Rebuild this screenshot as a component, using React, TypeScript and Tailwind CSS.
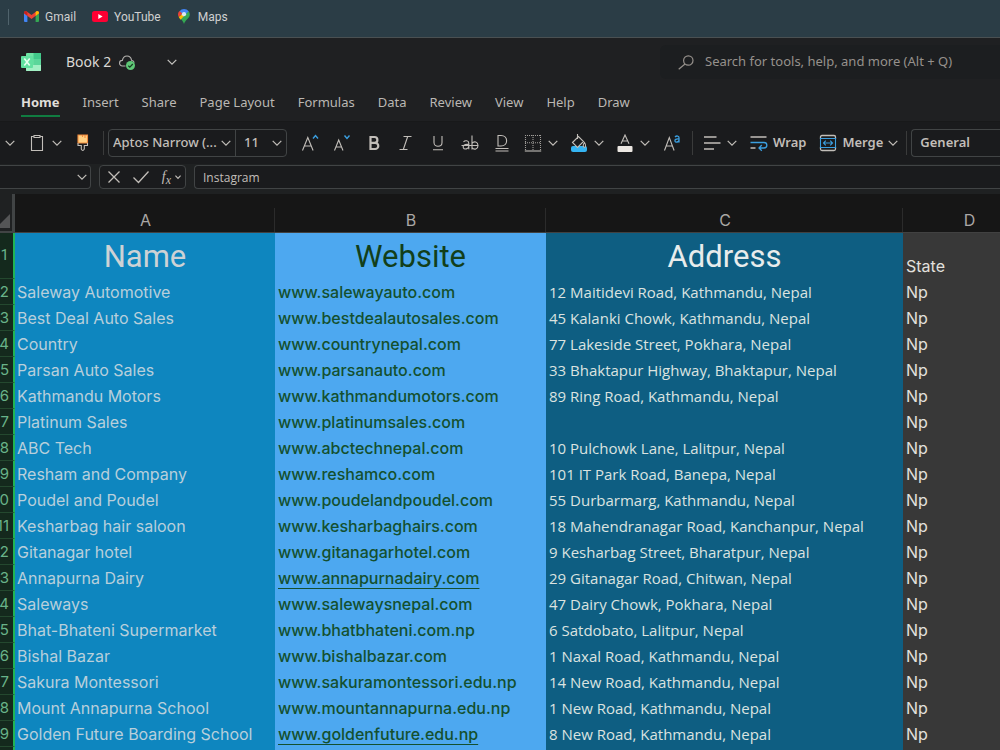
import type { ReactNode } from 'react';
import { clsx } from 'clsx';

const tabs = ['Home', 'Insert', 'Share', 'Page Layout', 'Formulas', 'Data', 'Review', 'View', 'Help', 'Draw'];

const rows = [
  { name: 'Saleway Automotive', site: 'www.salewayauto.com', address: '12 Maitidevi Road, Kathmandu, Nepal' },
  { name: 'Best Deal Auto Sales', site: 'www.bestdealautosales.com', address: '45 Kalanki Chowk, Kathmandu, Nepal' },
  { name: 'Country', site: 'www.countrynepal.com', address: '77 Lakeside Street, Pokhara, Nepal' },
  { name: 'Parsan Auto Sales', site: 'www.parsanauto.com', address: '33 Bhaktapur Highway, Bhaktapur, Nepal' },
  { name: 'Kathmandu Motors', site: 'www.kathmandumotors.com', address: '89 Ring Road, Kathmandu, Nepal' },
  { name: 'Platinum Sales', site: 'www.platinumsales.com', address: '' },
  { name: 'ABC Tech', site: 'www.abctechnepal.com', address: '10 Pulchowk Lane, Lalitpur, Nepal' },
  { name: 'Resham and Company', site: 'www.reshamco.com', address: '101 IT Park Road, Banepa, Nepal' },
  { name: 'Poudel and Poudel', site: 'www.poudelandpoudel.com', address: '55 Durbarmarg, Kathmandu, Nepal' },
  { name: 'Kesharbag hair saloon', site: 'www.kesharbaghairs.com', address: '18 Mahendranagar Road, Kanchanpur, Nepal' },
  { name: 'Gitanagar hotel', site: 'www.gitanagarhotel.com', address: '9 Kesharbag Street, Bharatpur, Nepal' },
  { name: 'Annapurna Dairy', site: 'www.annapurnadairy.com', address: '29 Gitanagar Road, Chitwan, Nepal', linked: true },
  { name: 'Saleways', site: 'www.salewaysnepal.com', address: '47 Dairy Chowk, Pokhara, Nepal' },
  { name: 'Bhat-Bhateni Supermarket', site: 'www.bhatbhateni.com.np', address: '6 Satdobato, Lalitpur, Nepal' },
  { name: 'Bishal Bazar', site: 'www.bishalbazar.com', address: '1 Naxal Road, Kathmandu, Nepal' },
  { name: 'Sakura Montessori', site: 'www.sakuramontessori.edu.np', address: '14 New Road, Kathmandu, Nepal' },
  { name: 'Mount Annapurna School', site: 'www.mountannapurna.edu.np', address: '1 New Road, Kathmandu, Nepal' },
  { name: 'Golden Future Boarding School', site: 'www.goldenfuture.edu.np', address: '8 New Road, Kathmandu, Nepal', linked: true },
];

function Chevron({ className, small }: { className?: string; small?: boolean }) {
  return (
    <svg
      className={clsx('shrink-0', small ? 'h-1.5 w-1.5' : 'h-2.5 w-2.5', className)}
      viewBox="0 0 10 10"
      fill="none"
      stroke="currentColor"
      strokeWidth={small ? 2 : 1.2}
    >
      <path d="M.7 2.8 5 7.2l4.3-4.4" />
    </svg>
  );
}

function Icon({ children }: { children: ReactNode }) {
  return (
    <svg className="h-[18px] w-[18px] shrink-0" viewBox="0 0 18 18" fill="none" stroke="currentColor" strokeWidth="1.1">
      {children}
    </svg>
  );
}

function IconButton({ label, children }: { label: string; children: ReactNode }) {
  return (
    <button aria-label={label} className="flex h-8 w-8 shrink-0 items-center justify-center">
      <Icon>{children}</Icon>
    </button>
  );
}

function MenuButton({ label, children }: { label: string; children: ReactNode }) {
  return (
    <button aria-label={label} className="flex h-8 w-[46px] shrink-0 items-center justify-center gap-1.5">
      <Icon>{children}</Icon>
      <Chevron />
    </button>
  );
}

function Divider() {
  return <div className="h-6 w-px shrink-0 bg-[#3a3b3b]" />;
}

function Bookmarks() {
  return (
    <nav className="flex h-[38px] items-center border-b border-[#4a5052] bg-[#2b3d46] pb-1 pl-2 font-['Roboto',sans-serif] text-xs text-[#cfd0d0]">
      <div className="h-4 w-px bg-[#50636c]" />
      <a href="#gmail" className="ml-[15px] flex items-center gap-1.5">
        <svg className="h-[11px] w-[15px]" viewBox="0 0 15 11">
          <path fill="#4285f4" d="M0 1.5V10q0 1 1 1h2.4V4.5Z" />
          <path fill="#34a853" d="M15 1.5V10q0 1-1 1h-2.4V4.5Z" />
          <path fill="#ea4335" d="M0 1.6Q.2 0 1.6 0q.6 0 1.2.5L7.5 4l4.7-3.5q.6-.5 1.2-.5Q14.8 0 15 1.6v.7L7.5 7.9 0 2.3Z" />
          <path fill="#c5221f" d="M0 1.6Q.2 0 1.6 0q1 0 1.8.9v4L0 2.3Z" />
          <path fill="#fbbc04" d="M15 1.6Q14.8 0 13.4 0q-1 0-1.8.9v4L15 2.3Z" />
        </svg>
        Gmail
      </a>
      <a href="#youtube" className="ml-4 flex items-center gap-1.5">
        <svg className="h-[11px] w-4" viewBox="0 0 16 11">
          <rect width="16" height="11" rx="2.5" fill="#ff0033" />
          <path d="M6.3 3v5l4.3-2.5Z" fill="#fff" />
        </svg>
        YouTube
      </a>
      <a href="#maps" className="ml-[17px] flex items-center gap-2">
        <svg className="h-[15px] w-3" viewBox="0 0 12 15">
          <path fill="#34a853" d="M11.8 5.5C11.8 9.5 7.3 10.5 6 15 5.2 12.5 3.9 11.2 2.5 9.5L10.5 2q1.3 1.5 1.3 3.5Z" />
          <path fill="#4285f4" d="M10.7 2.2 5 8 1.5 2.2Q3.2 0 6 0t4.7 2.2Z" />
          <path fill="#ea4335" d="M1.5 2.1 4.2 4.4.8 8Q0 6.8 0 5.2q0-1.7 1.5-3.1Z" />
          <path fill="#fbbc04" d="M4.2 5 .7 8.1q.7 1.3 1.9 2.6L7 6Z" />
          <circle cx="6" cy="5.2" r="2.1" fill="#dce9ee" />
        </svg>
        Maps
      </a>
    </nav>
  );
}

function TitleBar() {
  return (
    <header className="flex h-12 items-center">
      <svg className="ml-[21px] h-[18px] w-5 shrink-0" viewBox="0 0 20 18">
        <rect x="5" width="15" height="18" rx="1" fill="#6fe3a4" />
        <path fill="#41c98a" d="M12.5 0H19q1 0 1 1v5h-7.5Z" />
        <path fill="#5bd69a" d="M12.5 6H20v6h-7.5Z" />
        <path fill="#a2f0c4" d="M5 12h15v5q0 1-1 1H6q-1 0-1-1Z" />
        <rect y="3" width="12" height="12" rx="1" fill="#62e0a0" />
        <path d="m3.3 5.5 5.4 7m0-7-5.4 7" stroke="#e5fff0" strokeWidth="1.6" />
      </svg>
      <span className="ml-[25px] text-sm text-[#dad8d5]">Book 2</span>
      <svg className="ml-2 h-[15px] w-4 shrink-0" viewBox="0 0 16 15" fill="none">
        <path d="M6.5 11H3.3a2.8 2.8 0 0 1 .1-5.6C3.900 2.600 5.500 1 8 1c2.600 0 4.100 1.700 4.500 4.200 1.500.2 2.500 1 2.700 2.300" stroke="#b5b3b0" strokeWidth="1.1" />
        <circle cx="11.5" cy="10.5" r="4.5" fill="#5fc877" />
        <path d="m9.3 10.800 1.500 1.400 3-3.200" stroke="#173b22" strokeWidth="1.2" />
      </svg>
      <button aria-label="File menu" className="ml-8 text-[#c5c3c0]">
        <Chevron />
      </button>
      <label className="ml-auto flex h-[34px] w-[340px] items-center gap-[11px] rounded-l-md bg-[#1c1e20] pl-[18px] text-[#96918c]">
        <svg className="h-[15px] w-4 shrink-0" viewBox="0 0 16 15" fill="none" stroke="currentColor" strokeWidth="1.2">
          <circle cx="10.3" cy="5.5" r="4.7" />
          <path d="M7 9 .7 14.3" />
        </svg>
        <input
          aria-label="Search"
          placeholder="Search for tools, help, and more (Alt + Q)"
          className="min-w-0 flex-1 bg-transparent text-[13px] outline-none placeholder:text-[#96918c]"
        />
      </label>
    </header>
  );
}

function Tabs() {
  return (
    <nav className="flex h-9 items-center gap-[23px] border-b border-[#18191a] pl-[21px] text-[13px] text-[#bab7b3]">
      {tabs.map((tab, i) => (
        <button
          key={tab}
          className={clsx('h-[26px] shrink-0 border-b-2', i === 0 ? 'border-[#107c41] font-bold text-[#e0deda]' : 'border-transparent')}
        >
          {tab}
        </button>
      ))}
    </nav>
  );
}

function Ribbon() {
  return (
    <div className="flex h-[42px] items-center bg-[#1a1b1d] pb-px pl-[5px] text-[13px] text-[#c2beb9]">
      <button aria-label="Undo options"><Chevron /></button>
      <button aria-label="Paste" className="ml-[13px] flex items-center gap-1.5">
        <Icon>
          <path d="M5.8 2.5H3.5v14h11v-14h-2.3" />
          <path d="M6 1.5h6v2H6Z" />
        </Icon>
        <Chevron />
      </button>
      <button aria-label="Format painter" className="ml-3">
        <Icon>
          <path d="M4 1h9.5v8H4Z" fill="#ffd083" stroke="#f08a3c" />
          <path d="M8.5 1v2M11 1v3" stroke="#f08a3c" />
          <path d="M4 9v2.5h3.3V15q1.5 3 3 0v-3.5h3.2V9" />
        </Icon>
      </button>
      <div className="ml-[11px]"><Divider /></div>

      <div className="ml-1 flex h-7 shrink-0 items-center rounded border border-[#414445]">
        <div className="relative flex h-full w-[127px] items-center border-r border-[#414445]">
          <select aria-label="Font" className="h-full w-full appearance-none bg-transparent pl-1 font-medium">
            <option>Aptos Narrow (...</option>
          </select>
          <Chevron className="pointer-events-none absolute right-1" />
        </div>
        <div className="relative flex h-full w-[50px] items-center">
          <select aria-label="Font size" className="h-full w-full appearance-none bg-transparent pl-2 font-medium">
            <option>11</option>
          </select>
          <Chevron className="pointer-events-none absolute right-1" />
        </div>
      </div>

      <div className="ml-[7px] flex">
        <IconButton label="Increase font size">
          <path d="m1.5 16.5 5.3-13 5.3 13M3.3 12h7" />
          <path d="m12 4.5 2.5-3 2.500 3" stroke="#3b9fe0" strokeWidth="1.4" />
        </IconButton>
        <IconButton label="Decrease font size">
          <path d="m1.5 16.5 4.2-10.500L10 16.500M3 13h5.500" />
          <path d="m11.5 1.5 2.5 3 2.500-3" stroke="#3b9fe0" strokeWidth="1.4" />
        </IconButton>
        <IconButton label="Bold">
          <path d="M5.5 3h4a2.9 2.9 0 0 1 0 5.8h-4Zm0 5.8h4.7a3.1 3.1 0 0 1 0 6.2H5.5Z" strokeWidth="2.2" />
        </IconButton>
        <IconButton label="Italic">
          <path d="M6.5 2.5h8M2.5 15.500h8M10.700 2.500l-4.400 13" />
        </IconButton>
        <IconButton label="Underline">
          <path d="M5 2v6.5c0 5 8 5 8 0V2M4 15.8h10" />
        </IconButton>
        <IconButton label="Strikethrough">
          <path d="M2.5 8c1.500-2 5.300-1.600 5.300 1.200v6M7.800 10.500C3 10 1.700 12 2.300 13.800c1 2.200 5.500 1.200 5.500-1.600M11 1.500v14M11 9.500c2-3 6-1.600 6 2s-4 5-6 2M.5 11.500h17" />
        </IconButton>
        <IconButton label="Double underline">
          <path d="M5 1.5h3c7.5 0 7.5 10.500 0 10.500H5ZM2.500 14.500h13M2.500 17h13" />
        </IconButton>
        <MenuButton label="Borders">
          <path d="M1 1.5h16M1 8.800h16M1.500 1v15M9 1v15M16.500 1v15" strokeDasharray="1 1" opacity=".8" />
          <path d="M.8 17h16.4" />
        </MenuButton>
        <MenuButton label="Fill color">
          <rect x="1" y="12" width="16" height="6" rx="2" fill="#35b4f2" stroke="none" />
          <path d="m2.5 8.500 6-6 5 5-6 6ZM7.500 0v5M14.500 8.500c-4.500 6 4 6.500 0 0Z" fill="#1a1b1d" />
        </MenuButton>
        <MenuButton label="Font color">
          <path d="M5 9.8 9 1l4 8.800M6.300 7h5.400" />
          <rect x="1.5" y="12" width="15" height="6" rx="1" fill="#ece7e2" stroke="none" />
        </MenuButton>
        <IconButton label="Change case">
          <path d="m1.5 16.5 4.8-13 4.800 13M3 12h6.600" />
          <path d="M12 3c1.5-1.600 4-1.200 4 .7v4.800M16 5c-3-.3-4.500.5-4 2.300.7 1.500 4 .8 4-1.300" stroke="#3b9fe0" strokeWidth="1.3" />
        </IconButton>
      </div>

      <div className="ml-1"><Divider /></div>
      <button aria-label="Alignment" className="ml-2.5 flex shrink-0 items-center gap-1.5">
        <Icon>
          <path d="M1 3h12.5M1 9h16.500M1 15h10" strokeWidth="1.3" />
        </Icon>
        <Chevron />
      </button>
      <button className="ml-[13px] flex shrink-0 items-center gap-[5px] font-semibold">
        <Icon>
          <path d="M.5 3h16M.5 14h5" strokeWidth="1.3" />
          <path d="M.5 8.5H14c3.800 0 3.800 5.500 0 5.500H9m2.800-3L9 14l2.800 2.800" stroke="#3b9fe0" strokeWidth="1.3" />
        </Icon>
        Wrap
      </button>
      <button className="ml-[13px] flex shrink-0 items-center gap-[5px] font-semibold">
        <Icon>
          <path d="M1.5 5V3q0-1.500 1.500-1.500h12q1.500 0 1.500 1.500v2M1.500 13v2q0 1.500 1.500 1.500h12q1.500 0 1.500-1.500v-2" strokeWidth="1.3" />
          <path d="M1.5 4.500h15v9h-15ZM4.500 9h9M6.800 6.700 4.500 9l2.300 2.300M11.200 6.700 13.500 9l-2.300 2.300" stroke="#3b9fe0" strokeWidth="1.1" />
        </Icon>
        Merge
        <Chevron />
      </button>
      <div className="ml-2"><Divider /></div>
      <select aria-label="Number format" className="ml-1 h-7 min-w-[80px] flex-1 appearance-none rounded-l border border-r-0 border-[#414445] bg-transparent pl-2 font-semibold">
        <option>General</option>
      </select>
    </div>
  );
}

function FormulaBar() {
  return (
    <div className="flex h-[30px] items-start gap-2 bg-[#1f2122] pt-px text-[#c2beb9]">
      <div className="relative flex h-6 w-[91px] shrink-0 items-center rounded-r border border-l-0 border-[#414445] bg-[#1a1b1d]">
        <input aria-label="Name box" className="h-full w-full bg-transparent pl-2 text-xs outline-none" />
        <Chevron className="pointer-events-none absolute right-[3px]" />
      </div>
      <div className="flex h-6 w-[87px] shrink-0 items-center justify-between rounded border border-[#414445] bg-[#1a1b1d] pl-[7px] pr-1">
        <button aria-label="Cancel">
          <svg className="h-3.5 w-3.5" viewBox="0 0 14 14" fill="none" stroke="currentColor" strokeWidth="1.3">
            <path d="m1.5 1.5 11 11m0-11-11 11" />
          </svg>
        </button>
        <button aria-label="Enter">
          <svg className="h-3.5 w-4" viewBox="0 0 16 14" fill="none" stroke="currentColor" strokeWidth="1.3">
            <path d="m.5 7.5 5 5L15.5 1.5" />
          </svg>
        </button>
        <button aria-label="Insert function" className="flex items-center gap-1">
          <span className="font-['Liberation_Serif',serif] text-sm leading-4 italic">
            f<sub className="text-xs">x</sub>
          </span>
          <Chevron small />
        </button>
      </div>
      <input
        aria-label="Formula"
        defaultValue="Instagram"
        className="h-6 min-w-0 flex-1 rounded-l border border-r-0 border-[#414445] bg-[#1a1b1d] pl-2 font-['Open_Sans',sans-serif] text-xs font-medium outline-none"
      />
    </div>
  );
}

function RowNumber({ value }: { value: number }) {
  return (
    <th scope="row" className="border-b border-r-2 border-b-[#24482f] border-r-[#21b455] bg-[#14291d] p-0 text-[15px] font-normal text-[#69b389]">
      <div className="flex justify-end pr-1">{value}</div>
    </th>
  );
}

function Sheet() {
  return (
    <table className="w-[1035px] min-w-full table-fixed border-separate border-spacing-0 font-['Inter',sans-serif] text-base leading-[25px] whitespace-nowrap">
      <colgroup>
        <col className="w-[15px]" />
        <col className="w-[260px]" />
        <col className="w-[271px]" />
        <col className="w-[357px]" />
        <col />
      </colgroup>
      <thead className="bg-[#161616] text-[#aaa7a5]">
        <tr className="h-[39px]">
          <th aria-label="Select all" className="border-r-[3px] border-b-2 border-[#414445] bg-[#1f2122] p-0 align-bottom">
            <svg className="mb-[3px] h-3.5 w-2.5" viewBox="0 0 10 14">
              <path d="M10 0v14H0V10Z" fill="#545556" />
            </svg>
          </th>
          {['A', 'B', 'C', 'D'].map((letter) => (
            <th key={letter} scope="col" className="border-b border-[#414141] p-0 pt-3.5 font-normal">
              <div className="border-r border-[#2b2b2b] pl-0.5 leading-6">{letter}</div>
            </th>
          ))}
        </tr>
      </thead>
      <tbody>
        <tr className="h-[46px] font-['Roboto',sans-serif] text-[31px]">
          <RowNumber value={1} />
          <td className="bg-[#0e86bf] p-0 text-center text-[#cdd2d5]">Name</td>
          <td className="bg-[#4da8f0] p-0 text-center text-[#123f1a]">Website</td>
          <td className="bg-[#0e5e82] p-0 text-center text-[#e8ecec]">Address</td>
          <td className="bg-[#383838] p-0 pl-[3px] align-bottom font-['Inter',sans-serif] text-base leading-[25px] text-[#e2e0de]">State</td>
        </tr>
        {rows.map((row, i) => (
          <tr key={row.site} className="h-[26px]">
            <RowNumber value={i + 2} />
            <td className="bg-[#0e86bf] p-0 pl-0.5 text-[#b8cfdb]">{row.name}</td>
            <td className="bg-[#4da8f0] p-0 pl-[3px] font-medium text-[#14502f]">
              <a href={`#${row.site}`} className={clsx(row.linked && 'underline underline-offset-4')}>{row.site}</a>
            </td>
            <td className="bg-[#0e5e82] p-0 pl-[3px] font-['Open_Sans',sans-serif] text-[15px] text-[#dbe3e0]">{row.address}</td>
            <td className="bg-[#383838] p-0 pl-[3px] text-[#e2e0de]">Np</td>
          </tr>
        ))}
        <tr className="h-[26px]">
          <RowNumber value={rows.length + 2} />
          <td className="bg-[#0e86bf] p-0" />
          <td className="bg-[#4da8f0] p-0" />
          <td className="bg-[#0e5e82] p-0" />
          <td className="bg-[#383838] p-0" />
        </tr>
      </tbody>
    </table>
  );
}

export default function App() {
  return (
    <main className="h-screen overflow-hidden bg-[#1f2022] font-['Noto_Sans',sans-serif]">
      <Bookmarks />
      <TitleBar />
      <Tabs />
      <Ribbon />
      <FormulaBar />
      <Sheet />
    </main>
  );
}
